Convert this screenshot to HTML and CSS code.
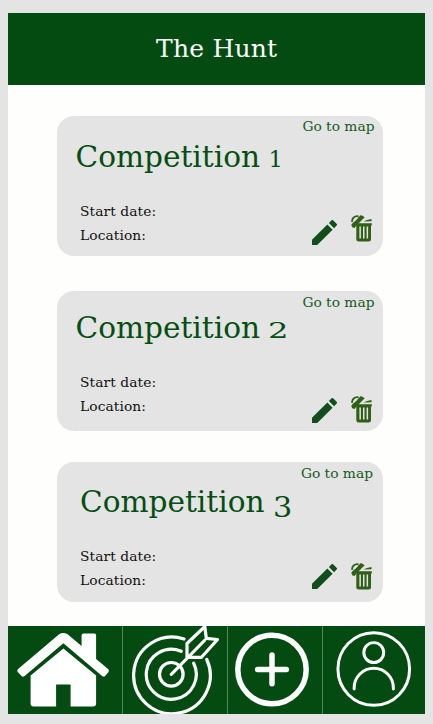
FILE: index.html
```html
<!DOCTYPE html>
<html lang="en">
<head>
<meta charset="utf-8">
<title>The Hunt</title>
<link rel="stylesheet" href="styles.css">
</head>
<body>
<svg class="symbols" aria-hidden="true">
  <symbol id="pencil" viewBox="3 3 18 18"><path d="M3 17.25V21h3.75L17.81 9.94l-3.75-3.75L3 17.25zM20.71 7.04a1 1 0 0 0 0-1.41l-2.34-2.34a1 1 0 0 0-1.41 0l-1.83 1.83 3.75 3.75 1.83-1.83z"/></symbol>
  <symbol id="trash" viewBox="0 0 21 27">
    <path fill-rule="evenodd" d="M5.500 8.200H20.800V10.500H20V24q0 2.500-2.500 2.500H8Q5.300 26.500 5.300 24V11zM8.400 11.500V23.500H9.900V11.500zM12 11.500V23.500H13.500V11.500zM15.600 11.500V23.500H17.100V11.500z"/>
    <path d="M1 8.800L8.500 1.200Q9.300-.3 11 .5L13.700 2.200 5.500 10.500 3.500 13 1.200 12.300.3 10z"/>
    <path class="handle" d="M1.200 6.800Q.8 4.200 2.700 2.500T7.500 1.300"/>
    <path class="gap" d="M2.700 6.200L6.300 2.900"/>
    <path d="M12.500 6.600L16 5 20.500 4V6.200z"/>
  </symbol>
</svg>
<div class="app">
  <header class="header"><h1>The Hunt</h1></header>
  <main class="list">
    <article class="card first">
      <a class="map">Go to map</a>
      <h2>Competition <span class="digit one">1</span></h2>
      <div class="bottom">
        <div class="details"><p class="start">Start date:</p><p class="location">Location:</p></div>
        <svg class="pencil"><use href="#pencil"/></svg>
        <svg class="trash"><use href="#trash"/></svg>
      </div>
    </article>
    <article class="card second">
      <a class="map">Go to map</a>
      <h2>Competition <span class="digit two">2</span></h2>
      <div class="bottom">
        <div class="details"><p class="start">Start date:</p><p class="location">Location:</p></div>
        <svg class="pencil"><use href="#pencil"/></svg>
        <svg class="trash"><use href="#trash"/></svg>
      </div>
    </article>
    <article class="card third">
      <a class="map">Go to map</a>
      <h2>Competition <span class="digit three">3</span></h2>
      <div class="bottom">
        <div class="details"><p class="start">Start date:</p><p class="location">Location:</p></div>
        <svg class="pencil"><use href="#pencil"/></svg>
        <svg class="trash"><use href="#trash"/></svg>
      </div>
    </article>
  </main>
  <nav class="nav">
    <a aria-label="Home"><svg viewBox="8 626 114 88">
      <path class="solid" d="M30.500 675.500L63.300 648.500 96 675.500V703.500Q96 706.500 93 706.500H70.500V684.500H56V706.500H33.500Q30.500 706.500 30.500 703.500z"/>
      <path class="solid" d="M18 669L59 634.300Q63.200 631.800 67.500 634.300L81.500 646V635.200Q81.500 633.500 83.200 633.500H94.500Q96 633.500 96 635.200V659L108 669Q109.500 670.500 108.400 672L105 675.900Q103.700 677.200 102 676L63.300 643.200 24.500 676Q22.700 677.300 21.500 675.900L17.600 672Q16.500 670.500 18 669z"/>
    </svg></a>
    <a aria-label="Competitions"><svg viewBox="123 626 104 88">
      <g class="line target">
        <circle cx="171.300" cy="674.300" r="11.800"/>
        <path d="M181.200 651.300A25 25 0 1 0 193.700 663.200M184 639A38.300 38.300 0 1 0 206.800 659.500"/>
        <path d="M171.300 674.300L204.500 640.500M187 658V643.500L204.800 626.500 206.300 638.300 217.500 639.500 201.500 657.300H187z"/>
      </g>
    </svg></a>
    <a aria-label="Add"><svg viewBox="228 626 94 88">
      <g class="line add"><circle cx="272" cy="669.500" r="34.200"/><path d="M272 655V683.800M257.600 669.500H286.400"/></g>
    </svg></a>
    <a aria-label="Profile"><svg viewBox="323 626 102 88">
      <g class="line profile"><ellipse cx="374" cy="669" rx="36" ry="36.500"/><circle cx="374" cy="652.500" r="10"/><path d="M354.300 689V688A19.700 19.700 0 0 1 393.700 688V689"/></g>
    </svg></a>
  </nav>
</div>
</body>
</html>
```
FILE: styles.css
```css
* { box-sizing: border-box; }
body {
  margin: 0;
  padding: 12.5px 8px 10px 8.3px;
  height: 724px;
  background: #e4e4e4;
  color: #111;
  font-family: "DejaVu Serif", serif;
}
h1, h2, p { margin: 0; font-weight: 400; white-space: nowrap; }
.symbols { display: none; }
.app { height: 701.5px; display: flex; flex-direction: column; background: #fefefc; overflow: hidden; }
.header { height: 72.5px; flex: none; background: #044b12; color: #fff; display: flex; justify-content: center; align-items: center; }
h1 { font-size: 25px; letter-spacing: 0.2px; line-height: 32px; padding-top: 1px; }
.list { flex: 1; padding: 30.500px 42px 0 48.700px; }
.card { height: 140px; background: #e4e4e4; border-radius: 17px; display: flex; flex-direction: column; padding: 1.500px 8.500px 0 18.500px; }
.card.second { margin-top: 35.500px; }
.card.third { margin-top: 31px; padding-right: 10px; }
.map { align-self: flex-end; color: #145a20; font-size: 13.800px; line-height: 19px; height: 20px; }
h2 { color: #044f12; font-size: 29.600px; line-height: 40px; height: 40px; }
.second h2 { margin-top: -5px; }
.third h2 { margin-top: -2px; padding-left: 4.500px; }
.digit { display: inline-block; line-height: 1; transform-origin: left; margin-left: -1px; }
.digit.one { font-size: 22.500px; }
.digit.two { font-size: 23px; transform: scaleX(1.400); }
.digit.three { font-size: 28px; transform: translateY(5px) scaleX(1.080); }
.bottom { display: flex; padding-left: 4.500px; margin-top: 22px; }
.details { width: 232.500px; font-size: 13.800px; line-height: 24.300px; letter-spacing: .1px; }
.pencil { width: 25px; height: 25px; margin-top: 20.500px; fill: #104f1b; }
.trash { width: 21px; height: 27px; margin: 16px 0 0 13.300px; fill: #2e6016; }
.second .pencil { margin-top: 28px; }
.second .trash { margin-top: 26px; }
.third .pencil { margin-top: 20.500px; }
.third .trash { margin-top: 19px; }
.handle { fill: none; stroke: #2e6016; stroke-width: 1.800; }
.gap { stroke: #e4e4e4; stroke-width: 1.300; }
.nav { height: 88px; flex: none; display: grid; grid-template-columns: 114.200px 105px 95px 1fr; background: #044b12; }
.nav a + a { border-left: 1px solid #55865e; }
.nav svg { display: block; width: 100%; height: 88px; }
.solid { fill: #fff; }
.line { fill: none; stroke: #fff; stroke-linecap: round; stroke-linejoin: round; }
.target { stroke-width: 3.200; }
.add { stroke-width: 5.500; }
.profile { stroke-width: 3; }
```
